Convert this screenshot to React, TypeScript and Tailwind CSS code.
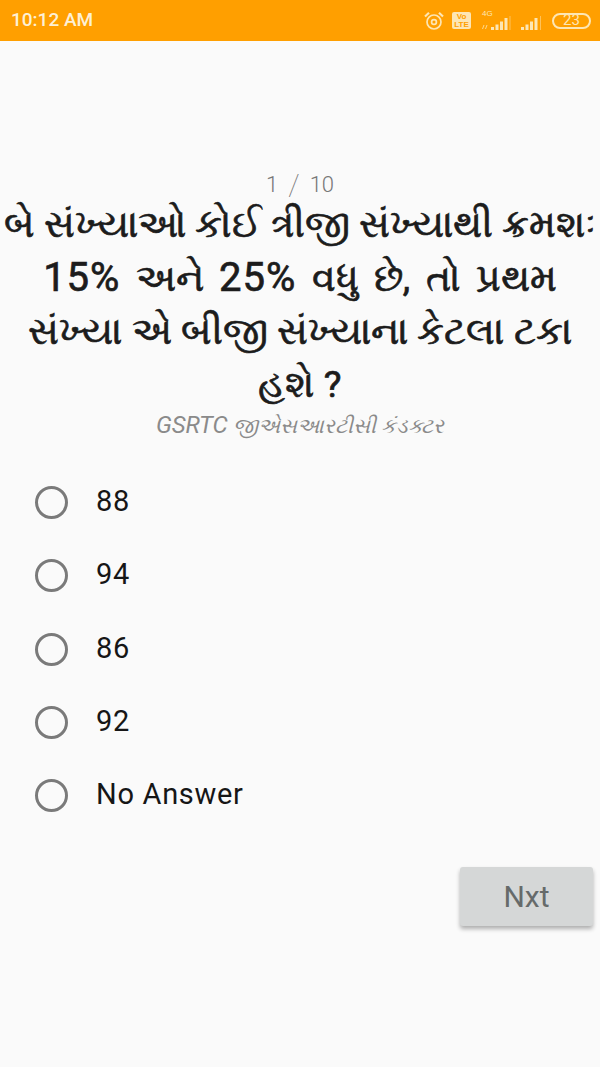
const options = ["88", "94", "86", "92", "No Answer"];

const StatusIcons = () => (
  <div className="flex items-center">
    {/* alarm */}
    <svg width="20" height="20" viewBox="0 0 20 20" fill="none" stroke="#fde6b4" strokeWidth="1.7">
      <circle cx="10" cy="11" r="7" />
      <circle cx="10" cy="11" r="2.4" />
      <path d="M1 5.5 L5 1.8 M19 5.5 L15 1.8" strokeWidth="2.2" />
    </svg>
    {/* volte */}
    <div className="ml-[8px] flex h-[17px] w-[19px] flex-col items-center justify-center rounded-[2px] bg-[#fde6b4] font-['Liberation_Sans',sans-serif] text-[8px] leading-[8px] font-bold text-[#ff9f00]">
      <span>Vo</span>
      <span>LTE</span>
    </div>
    {/* 4G signal */}
    <div className="relative ml-[10px] h-[20px] w-[31px]">
      <span className="absolute top-[-1px] left-[1px] font-['Liberation_Sans',sans-serif] text-[8px] leading-[8px] text-[#fde6b4]">4G</span>
      <svg width="31" height="20" viewBox="0 0 31 20" fill="#fde6b4" className="absolute top-0 left-0">
        <path d="M1 18l1.500-4h1l-1.500 4zM4 18l1.500-4h1l-1.500 4z" opacity="0.8" />
        <path d="M10 16h3v3h-3zM14.500 13.500h3v5.500h-3zM19 10.500h3v8.500h-3zM23.500 7h3v12h-3z" />
        <path d="M28.500 5h1v14h-1z" opacity="0.5" />
      </svg>
    </div>
    {/* signal */}
    <svg width="24" height="20" viewBox="0 0 24 20" fill="#fde6b4" className="ml-[8px]">
      <path d="M1 16h3v3h-3zM5.500 13.500h3v5.500h-3zM10 10.500h3v8.500h-3zM14.500 7h3v12h-3z" />
      <path d="M20 5h1v14h-1z" opacity="0.5" />
    </svg>
    {/* battery */}
    <div className="ml-[8px] flex h-[16px] w-[39px] items-center justify-center rounded-full border-2 border-[#fde6b4] font-['Roboto',sans-serif] text-[15px] leading-none text-[#fde6b4]">
      23
    </div>
  </div>
);

const Num = ({ children }: { children: React.ReactNode }) => (
  <span className="text-[40px] tracking-[1px]">{children}</span>
);

export default function App() {
  return (
    <div className="flex min-h-[1067px] w-[600px] flex-col bg-[#fafafa] font-['Roboto','Noto_Sans',sans-serif]">
      <div className="flex h-[41px] items-center justify-between bg-[#ff9f00] pr-[9px] pl-[11px]">
        <span className="text-[19px] font-medium text-[#fdf0d5]">10:12 AM</span>
        <StatusIcons />
      </div>

      <div className="mt-[132px] flex h-[24px] items-center justify-center text-[22px] leading-[24px] font-light text-[#777777]">
        <span>1</span>
        <span className="mx-[10px] text-[30px] font-thin">/</span>
        <span>10</span>
      </div>

      <div className="mt-[1px] text-center text-[37.500px] leading-[53px] text-[#1c1c1c] [-webkit-text-stroke:0.7px_#1c1c1c]">
        બે સંખ્યાઓ કોઈ ત્રીજી સંખ્યાથી ક્રમશઃ
        <br />
        <span className="[word-spacing:6px]">
          <Num>15%</Num> અને <Num>25%</Num> વધુ છે, તો પ્રથમ
        </span>
        <br />
        સંખ્યા એ બીજી સંખ્યાના કેટલા ટકા
        <br />
        હશે ?
      </div>

      <div className="mt-[-1px] text-center text-[21px] leading-[30px] text-[#8a8a8a] italic">
        <span className="text-[24px]">GSRTC</span> જીએસઆરટીસી કંડક્ટર
      </div>

      <div className="mt-[25px] flex flex-col pl-[35px]">
        {options.map((opt) => (
          <label key={opt} className="flex h-[73.300px] items-center">
            <span className="h-[33px] w-[33px] rounded-full border-[3px] border-[#7a7a7a]" />
            <span className="ml-[28px] pb-[2px] text-[29px] leading-none tracking-[0.7px] text-[#161616]">{opt}</span>
          </label>
        ))}
      </div>

      <div className="mt-[35px] flex justify-end pr-[7px]">
        <button className="h-[59px] w-[133px] rounded-[3px] bg-[#d5d7d7] text-[30px] text-[#666a6a] shadow-[0_3px_4px_rgba(0,0,0,0.3)]">Nxt</button>
      </div>
    </div>
  );
}
